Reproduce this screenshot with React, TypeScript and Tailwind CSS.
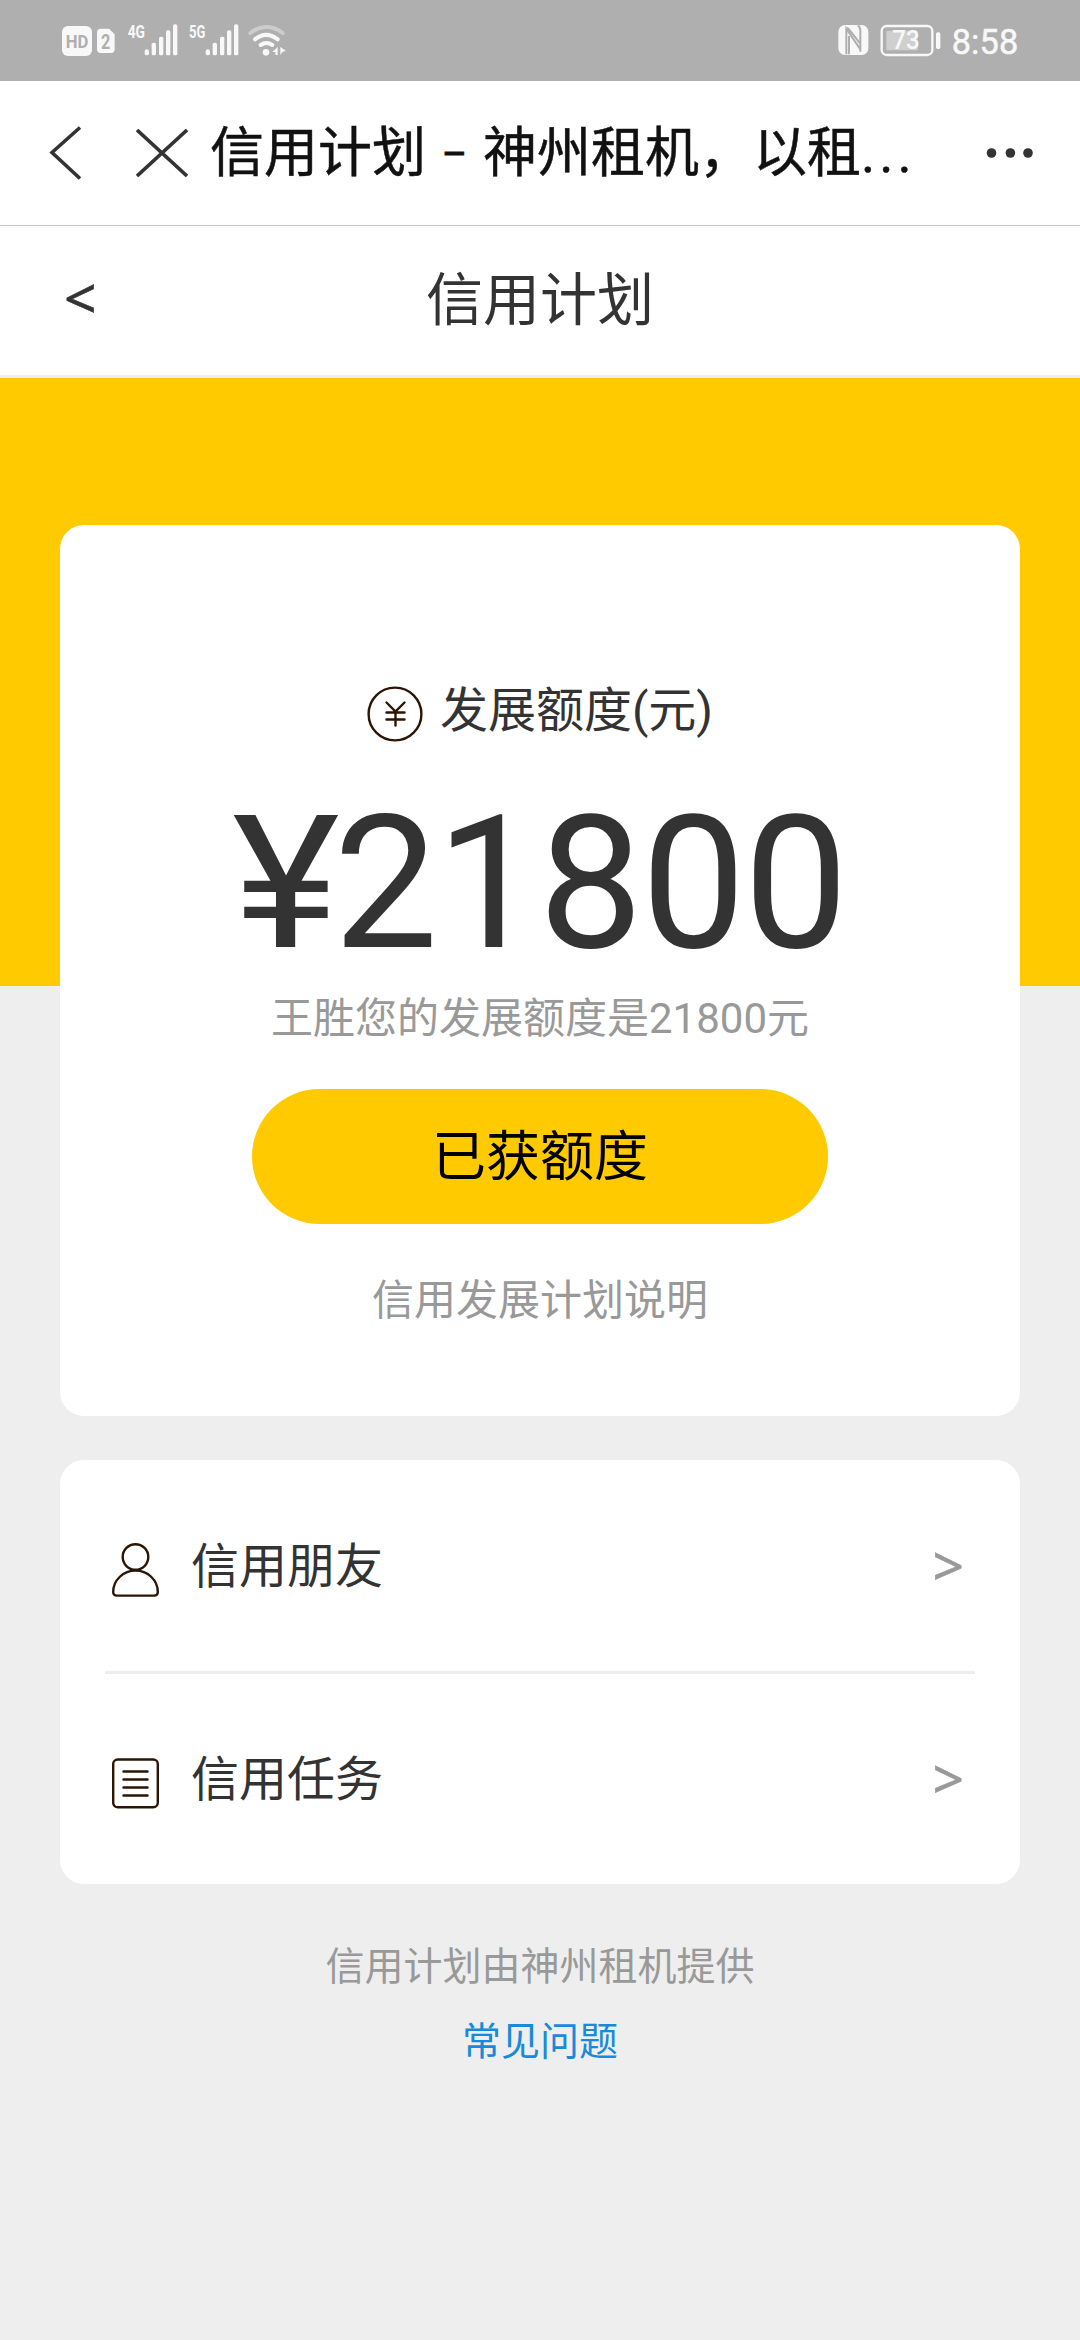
import type { ReactNode } from "react";

function StatusLeft() {
  return (
    <svg width="270" height="81" viewBox="0 0 810 243" fill="#f8f8f8">
      <rect x="66" y="78" width="90" height="90" rx="18" />
      <text x="111" y="143" textAnchor="middle" textLength="68" lengthAdjust="spacingAndGlyphs" fontSize="55" fontWeight="700" fill="#afafaf">HD</text>
      <path d="M182 86h25l17 17v45q0 11-11 11h-31q-11 0-11-11V97q0-11 11-11z" />
      <text x="197" y="146" textAnchor="middle" textLength="28" lengthAdjust="spacingAndGlyphs" fontSize="62" fontWeight="700" fill="#afafaf">2</text>
      <text x="263" y="114" textLength="52" lengthAdjust="spacingAndGlyphs" fontSize="54" fontWeight="700">4G</text>
      <text x="447" y="114" textLength="49" lengthAdjust="spacingAndGlyphs" fontSize="54" fontWeight="700">5G</text>
      {[314, 497].map((x) => (
        <g key={x}>
          <rect x={x} y="148" width="13" height="18" rx="6.5" />
          <rect x={x + 21} y="128" width="13" height="38" rx="5" />
          <rect x={x + 43} y="110" width="13" height="56" rx="5" />
          <rect x={x + 64} y="91" width="13" height="75" rx="5" />
          <rect x={x + 85} y="73" width="13" height="93" rx="5" />
        </g>
      ))}
      <g fill="none" strokeWidth="12" strokeLinecap="round">
        <path d="M631 99Q680 63 728 99" stroke="#cdcdcd" />
        <path d="M645 118Q678 91 713 118" stroke="#f8f8f8" />
        <path d="M662 135Q679 123 697 135" stroke="#f8f8f8" />
      </g>
      <circle cx="678" cy="157" r="10" />
      <path d="M697 156l16-15v24h-7v-9zM721 141l17 12-10 2-7 10z" />
    </svg>
  );
}

function StatusRight() {
  return (
    <svg width="270" height="81" viewBox="0 0 810 243" fill="#f8f8f8">
      <rect x="85" y="75" width="90" height="90" rx="20" />
      <path d="M109 163V86L151 148M109 86Q112 82 117 88L150 130M117 108V163M151 155V92Q151 80 143 77" fill="none" stroke="#afafaf" strokeWidth="6" />
      <rect x="229" y="92" width="94" height="59" rx="4" fill="#cfcfcf" />
      <rect x="215" y="78" width="152" height="87" rx="15" fill="none" stroke="#f8f8f8" strokeWidth="7" />
      <text x="288" y="148" textAnchor="middle" fontSize="76" fontWeight="500" textLength="82" lengthAdjust="spacingAndGlyphs">73</text>
      <rect x="378" y="97" width="13" height="50" rx="5" />
      <text x="425" y="161" fontSize="103" textLength="200" lengthAdjust="spacing" stroke="#f8f8f8" strokeWidth="1.500">8:58</text>
    </svg>
  );
}

function YuanIcon() {
  return (
    <svg width="56" height="56" viewBox="0 0 56 56" fill="none" stroke="#2b1606" strokeWidth="2.4" strokeLinecap="round">
      <circle cx="28" cy="28" r="26.4" />
      <path d="M19.5 16.5l9 9 9-9M28.5 25.5v14M19.5 26.5h18M19.5 33.500h18" />
    </svg>
  );
}

function UserIcon() {
  return (
    <svg width="48" height="54" viewBox="0 0 48 54" fill="none" stroke="#2b1606" strokeWidth="2.4">
      <circle cx="23.500" cy="14" r="12.800" />
      <path d="M5 52.600Q1.200 52.600 1.200 49C1.200 37 11.500 27.500 23.500 27.500S45.800 37 45.800 49Q45.800 52.600 42 52.600Z" />
    </svg>
  );
}

function ListIcon() {
  return (
    <svg width="48" height="51" viewBox="0 0 48 51" fill="none" stroke="#2b1606" strokeWidth="2.4" strokeLinecap="round">
      <rect x="1.200" y="1.500" width="44.600" height="47.800" rx="4.500" />
      <path d="M11.500 13.500h24M11.500 21.500h24M11.500 29.500h24M11.500 37.500h24" />
    </svg>
  );
}

function Row({ icon, label }: { icon: ReactNode; label: string }) {
  return (
    <div className="flex h-[210px] items-center pr-[11px] pl-[7px]">
      <div className="mt-[8px] flex w-[48px] shrink-0 justify-center">{icon}</div>
      <span className="mt-[2px] ml-[31px] flex-1 text-[48px] leading-[60px] text-[#333]">{label}</span>
      <span className="mb-[2px] font-['Noto_Sans'] text-[55px] leading-[60px] text-[#999] [-webkit-text-stroke:0.5px_#999]">&gt;</span>
    </div>
  );
}

export default function App() {
  return (
    <div className="flex h-[2340px] w-[1080px] flex-col overflow-hidden bg-[#eee] font-[Roboto,'Noto_Sans_CJK_SC',sans-serif] whitespace-nowrap">
      <div className="flex h-[81px] shrink-0 justify-between bg-[#afafaf] pl-[40px]">
        <StatusLeft />
        <StatusRight />
      </div>

      <header className="flex h-[145px] shrink-0 items-center border-b border-[#c8c8c8] bg-white pl-[48px]">
        <svg className="shrink-0" width="34" height="54" viewBox="0 0 34 54" fill="none" stroke="#333" strokeWidth="3.600">
          <path d="M32 1.500L4 26.500L32 52.500" />
        </svg>
        <svg className="ml-[54px] shrink-0" width="52" height="48" viewBox="0 0 52 48" fill="none" stroke="#333" strokeWidth="3.600">
          <path d="M1 1L51 47M51 1L1 47" />
        </svg>
        <h1 className="mt-[2px] ml-[22px] flex w-[775px] text-[54px] leading-[80px] text-[#111] [-webkit-text-stroke:0.5px_#111]">
          <span>信用计划</span>
          <span className="w-[57px] text-center text-[38px] [-webkit-text-stroke:1px_#111]">–</span>
          <span>神州租机，以租</span>
          <span className="tracking-[4px]">...</span>
        </h1>
        <svg width="48" height="12" viewBox="0 0 48 12" fill="#333">
          <circle cx="6.500" cy="6" r="4.800" />
          <circle cx="25.400" cy="6" r="4.800" />
          <circle cx="43" cy="6" r="4.800" />
        </svg>
      </header>

      <div className="grid h-[152px] shrink-0 grid-cols-[200px_1fr_200px] items-center border-b-[3px] border-[#eee] bg-white text-[57px] leading-[80px] text-[#333]">
        <span className="mb-[7px] pl-[64px] font-['Noto_Sans'] [-webkit-text-stroke:0.5px_#333]">&lt;</span>
        <h2 className="text-center">信用计划</h2>
      </div>

      <div className="h-[608px] shrink-0 bg-[#ffcb00]" />

      <main className="-mt-[461px] flex flex-col px-[60px]">
        <section className="flex h-[891px] flex-col items-center rounded-[24px] bg-white pt-[156px]">
          <div className="flex h-[60px] items-center">
            <div className="mt-[5px]"><YuanIcon /></div>
            <span className="ml-[17px] text-[48px] leading-[60px] text-[#333]">发展额度(元)</span>
          </div>
          <div className="mt-[32px] flex h-[216px] pl-[3px] text-[186px] leading-[220px] tracking-[-2px] text-[#333]">
            <span className="scale-x-[1.1]">¥</span>
            <span className="ml-[1px]">21800</span>
          </div>
          <div className="text-[42px] leading-[60px] text-[#999]">王胜您的发展额度是21800元</div>
          <button className="mt-[40px] h-[135px] w-[576px] rounded-full bg-[#ffcb00] pt-[2px] text-[54px] leading-[133px] text-black">已获额度</button>
          <div className="mt-[47px] text-[42px] leading-[60px] text-[#999]">信用发展计划说明</div>
        </section>

        <section className="mt-[44px] h-[424px] rounded-[24px] bg-white px-[45px] pt-[1px]">
          <Row icon={<UserIcon />} label="信用朋友" />
          <div className="h-[3px] bg-[#eee]" />
          <Row icon={<ListIcon />} label="信用任务" />
        </section>

        <footer className="mt-[53px] flex flex-col items-center text-[39px] leading-[60px]">
          <span className="text-[#999]">信用计划由神州租机提供</span>
          <a className="mt-[15px] text-[#1989dc]">常见问题</a>
        </footer>
      </main>
    </div>
  );
}
